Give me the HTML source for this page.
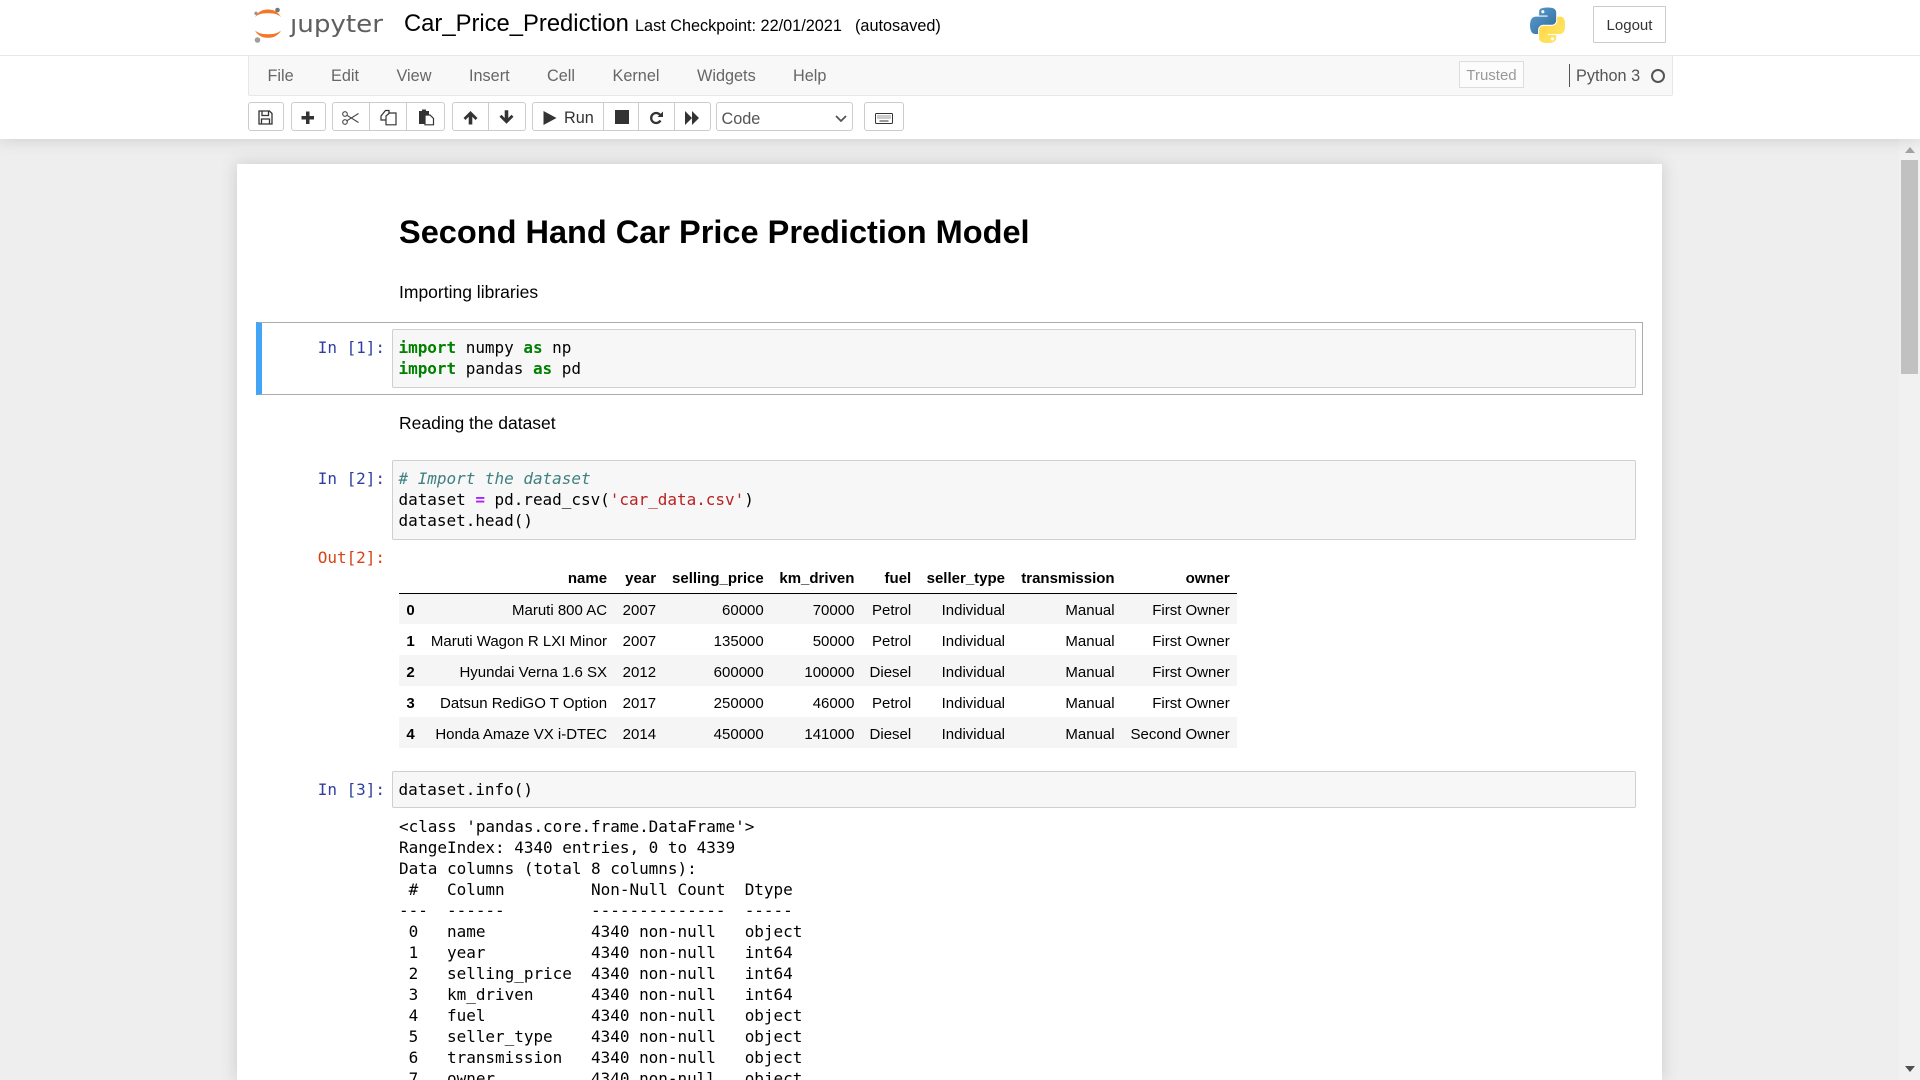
<!DOCTYPE html>
<html lang="en"><head><meta charset="utf-8"><title>Car_Price_Prediction</title>
<style>
html,body{margin:0;padding:0;width:1920px;height:1080px;overflow:hidden;background:#eee;font-family:"Liberation Sans",Arial,sans-serif;color:#000}
#root{position:relative;width:1920px;height:1080px;overflow:hidden;background:#eee}
.a{position:absolute}
.t{position:absolute;white-space:pre;line-height:20px}
#hdr{position:absolute;left:0;top:0;width:1920px;height:139px;background:#fff;box-shadow:0 0 15px 1px rgba(87,87,87,.2);z-index:2}
#nb{position:absolute;left:237px;top:164px;width:1425px;height:916px;background:#fff;box-shadow:0 0 15px 1px rgba(87,87,87,.2)}
.m{color:#666;font-size:16.25px;top:66px}
.btn{position:absolute;top:102px;height:27px;border:1px solid #ccc;border-radius:3px;background:#fff;box-sizing:content-box}
.sep{position:absolute;top:103px;width:1px;height:27px;background:#ccc}
svg.i{position:absolute;z-index:3}
.inp{position:absolute;left:392px;width:1244px;background:#f7f7f7;border:1px solid #cfcfcf;border-radius:2px;box-sizing:border-box}
.code{position:absolute;left:398.500px;margin:0;font:16px/21px "DejaVu Sans Mono","Liberation Mono",monospace;letter-spacing:-.03px;color:#000;white-space:pre}
.pin{position:absolute;right:1535px;font:16px/21px "DejaVu Sans Mono","Liberation Mono",monospace;letter-spacing:-.03px;color:#303F9F;white-space:pre}
.k{color:#008000;font-weight:bold}.o{color:#A2F;font-weight:bold}.c{color:#408080;font-style:italic}.s{color:#BA2121}
table{position:absolute;left:399px;top:563px;border-collapse:collapse;table-layout:fixed;width:838px;font-size:15px;color:#000}
th,td{padding:3px 7.25px 0 0;text-align:right;font-weight:normal;box-sizing:border-box;white-space:nowrap;height:31px;overflow:visible}
thead th{font-weight:bold;height:30px;padding-top:2px;border-bottom:1.25px solid #000}
tbody th{font-weight:bold}
tbody tr:nth-child(odd){background:#f5f5f5}
</style></head><body><div id="root">
<div id="nb"></div>

<div id="hdr">
<svg class="a" style="left:250px;top:4px" width="140" height="42" viewBox="0 0 140 42">
<path d="M5 13C9 6 15 5.500 18 5.500s9 .5 13 7.500C27 9.500 22 9.300 18 9.300S9 9.500 5 13z" fill="#F37726"/>
<path d="M5 26.500C9 33.500 15 33.800 18 33.800s9-.3 13-7.300C27 30 22 30.200 18 30.200S9 30 5 26.500z" fill="#F37726"/>
<circle cx="27.500" cy="6" r="2.300" fill="#767677"/><circle cx="6" cy="9.300" r="1.700" fill="#989798"/><circle cx="7.500" cy="36" r="2.800" fill="#9E9E9E"/>
<text x="40" y="28" font-family="DejaVu Sans" font-size="24" fill="#5f5f5f" textLength="93" lengthAdjust="spacingAndGlyphs">jupyter</text>
<rect x="40" y="6" width="8" height="7" fill="#fff"/>
</svg>
<div class="t" style="left:404px;top:14px;font-size:23.8px;line-height:20px">Car_Price_Prediction</div>
<div class="t" style="left:635px;top:16px;font-size:16.25px">Last Checkpoint: 22/01/2021</div>
<div class="t" style="left:855px;top:16px;font-size:16.25px">(autosaved)</div>
<svg class="a" style="left:1530px;top:7px" width="35" height="36" viewBox="0 0 110 110">
<defs>
<linearGradient id="pb" x1="0" y1="0" x2="1" y2="1"><stop offset="0" stop-color="#5A9FD4"/><stop offset="1" stop-color="#306998"/></linearGradient>
<linearGradient id="py" x1="0" y1="0" x2="1" y2="1"><stop offset="0" stop-color="#FFD43B"/><stop offset="1" stop-color="#FFE873"/></linearGradient>
</defs>
<path fill="url(#pb)" d="M54.919 0.001c-4.584.022-8.961.413-12.812 1.095C30.760 3.099 28.700 7.295 28.700 15.032v10.219h26.812v3.406H18.638c-7.792 0-14.616 4.684-16.750 13.594-2.462 10.213-2.571 16.586 0 27.250 1.906 7.938 6.458 13.594 14.250 13.594h9.219v-12.250c0-8.850 7.657-16.656 16.750-16.656h26.781c7.455 0 13.406-6.138 13.406-13.625V15.032c0-7.266-6.130-12.725-13.406-13.937C64.282.328 59.502-.02 54.918.001zM40.419 8.220c2.770 0 5.031 2.299 5.031 5.125 0 2.816-2.262 5.094-5.031 5.094-2.779 0-5.031-2.277-5.031-5.094 0-2.826 2.252-5.125 5.031-5.125z"/>
<path fill="url(#py)" d="M85.638 28.657v11.906c0 9.231-7.826 17-16.750 17H42.107c-7.336 0-13.406 6.278-13.406 13.625v25.531c0 7.266 6.319 11.540 13.406 13.625 8.487 2.496 16.626 2.947 26.781 0 6.750-1.954 13.406-5.888 13.406-13.625V86.501H55.513v-3.406h40.188c7.792 0 10.696-5.436 13.406-13.594 2.799-8.399 2.680-16.476 0-27.250-1.926-7.757-5.604-13.594-13.406-13.594zM70.575 93.313c2.779 0 5.031 2.277 5.031 5.094 0 2.826-2.252 5.125-5.031 5.125-2.770 0-5.031-2.299-5.031-5.125 0-2.816 2.262-5.094 5.031-5.094z"/>
</svg>
<div class="a" style="left:1593px;top:6px;width:73px;height:37px;box-sizing:border-box;border:1px solid #ccc;border-radius:1px;font-size:15px;line-height:37px;text-align:center;color:#333">Logout</div>

<div class="a" style="left:0;top:55px;width:1920px;height:1px;background:#e7e7e7"></div>
<div class="a" style="left:248px;top:55px;width:1425px;height:41px;box-sizing:border-box;background:#f8f8f8;border:1px solid #e7e7e7;border-radius:0 0 2px 2px"></div>
<div class="t m" style="left:267.500px">File</div>
<div class="t m" style="left:331px">Edit</div>
<div class="t m" style="left:396.500px">View</div>
<div class="t m" style="left:469px">Insert</div>
<div class="t m" style="left:547px">Cell</div>
<div class="t m" style="left:612.500px">Kernel</div>
<div class="t m" style="left:697px">Widgets</div>
<div class="t m" style="left:793px">Help</div>
<div class="a" style="left:1459px;top:61px;width:65px;height:27px;box-sizing:border-box;border:1px solid #ddd;font-size:15px;line-height:27px;text-align:center;color:#999;background:#fcfcfc">Trusted</div>
<div class="a" style="left:1569px;top:64px;width:1px;height:23px;background:#555"></div>
<div class="t" style="left:1576px;top:66px;font-size:16.25px;color:#555">Python 3</div>
<div class="a" style="left:1651px;top:68.500px;width:14px;height:14px;box-sizing:border-box;border:2.200px solid #555;border-radius:50%"></div>

<div class="btn" style="left:248px;width:34px"></div>
<div class="btn" style="left:290.500px;width:33px"></div>
<div class="btn" style="left:332px;width:111px"></div><div class="sep" style="left:368.500px"></div><div class="sep" style="left:406px"></div>
<div class="btn" style="left:452px;width:72px"></div><div class="sep" style="left:487.500px"></div>
<div class="btn" style="left:532px;width:177px"></div><div class="sep" style="left:603px"></div><div class="sep" style="left:638px"></div><div class="sep" style="left:674px"></div>
<div class="btn" style="left:716px;width:135px"></div>
<div class="btn" style="left:864px;width:38px"></div>

<!-- save -->
<svg class="i" style="left:258px;top:110px" width="15" height="15" viewBox="0 0 15 15" fill="none" stroke="#333" stroke-width="1.300"><path d="M1 1h10.500L14 3.500V14H1z"/><path d="M4 1v4.500h6.500V1M3.500 14V9h8v5"/></svg>
<!-- plus -->
<svg class="i" style="left:301px;top:110.500px" width="14" height="14" viewBox="0 0 14 14"><path fill="#333" d="M5 .5h3.500V5H13v3.500H8.500V13H5V8.500H.5V5H5z"/></svg>
<!-- cut -->
<svg class="i" style="left:342px;top:111px" width="17" height="14" viewBox="0 0 17 14" fill="none" stroke="#444" stroke-width="1.100"><circle cx="3" cy="3" r="2.300"/><circle cx="3" cy="11" r="2.300"/><path d="M5 4.300L16.500 11.500M5 9.700L16.500 2.500"/></svg>
<!-- copy -->
<svg class="i" style="left:380px;top:109px" width="17" height="17" viewBox="0 0 17 17" fill="#fff" stroke="#333" stroke-width="1.200"><path d="M1 7l4.500-5.500H9V11H1z"/><path d="M6 15.800V7l3.500-3H16v11.800z"/></svg>
<!-- paste -->
<svg class="i" style="left:418px;top:109px" width="17" height="17" viewBox="0 0 17 17"><path fill="#333" d="M1 2h3V.5h4V2h3v13H1z"/><path fill="#fff" stroke="#333" stroke-width="1.200" d="M7 15.800V6h5l3.500 3.500v6.300z"/></svg>
<!-- up -->
<svg class="i" style="left:463px;top:111px" width="15" height="14" viewBox="0 0 15 14"><path fill="#333" d="M7.500 0L14.500 7l-2 2-3.200-3.200V13.500H5.700V5.800L2.500 9 .5 7z"/></svg>
<!-- down -->
<svg class="i" style="left:499px;top:110px" width="15" height="14" viewBox="0 0 15 14"><path fill="#333" d="M7.500 13.800L14.500 6.800l-2-2-3.200 3.200V.3H5.700V8L2.500 4.800l-2 2z"/></svg>
<!-- play -->
<svg class="i" style="left:543px;top:110.500px" width="14" height="14" viewBox="0 0 14 14"><path fill="#333" d="M.5 0L13.500 7 .5 14z"/></svg>
<div class="t" style="left:564px;top:108px;font-size:16.25px;color:#333;z-index:3">Run</div>
<!-- stop -->
<div class="a" style="left:614.500px;top:110px;width:14px;height:14px;background:#333;z-index:3"></div>
<!-- restart -->
<svg class="i" style="left:649px;top:110.500px" width="15" height="14" viewBox="0 0 15 14" fill="none"><path stroke="#333" stroke-width="2.300" d="M11.500 9.500A5 5 0 1 1 11 3.800"/><path fill="#333" d="M8.500 6h5.500V.5z"/></svg>
<!-- ff -->
<svg class="i" style="left:685px;top:110.500px" width="14" height="14" viewBox="0 0 14 14"><path fill="#333" d="M0 0l7 7-7 7zM7 0l7 7-7 7z"/></svg>
<!-- select -->
<div class="t" style="left:721.500px;top:109px;font-size:16.25px;color:#555;z-index:3">Code</div>
<svg class="i" style="left:834.500px;top:115px" width="12" height="7" viewBox="0 0 12 7" fill="none" stroke="#555" stroke-width="1.800"><path d="M1 1l5 5 5-5"/></svg>
<!-- keyboard -->
<svg class="i" style="left:875px;top:113px" width="18" height="11" viewBox="0 0 18 11"><rect x=".5" y=".5" width="17" height="10" rx="1" fill="#fff" stroke="#333"/><path stroke="#333" stroke-width="1" stroke-dasharray="1 1" d="M2.500 3h13M2.500 5h13"/><path stroke="#333" d="M4.500 8h9"/></svg>
</div>

<!-- scrollbar -->
<div class="a" style="left:1899px;top:139px;width:21px;height:941px;background:#f1f1f1;z-index:1"></div>
<div class="a" style="left:1901px;top:160px;width:17px;height:214px;background:#c1c1c1;z-index:1"></div>
<svg class="a" style="left:1905px;top:147px;z-index:1" width="10" height="6"><path d="M5 0l5 6H0z" fill="#a3a3a3"/></svg>
<svg class="a" style="left:1905px;top:1066px;z-index:1" width="10" height="6"><path d="M0 0h10L5 6z" fill="#505050"/></svg>

<!-- notebook content -->
<div class="t" style="left:399px;top:213px;font-size:32.53px;font-weight:bold;line-height:38px">Second Hand Car Price Prediction Model</div>
<div class="t" style="left:399px;top:282px;font-size:17.500px">Importing libraries</div>

<div class="a" style="left:256px;top:322px;width:1387px;height:73px;box-sizing:border-box;border:1px solid #ababab;border-left:6px solid #42A5F5"></div>
<div class="inp" style="top:329px;height:59px"></div>
<div class="pin" style="top:337px">In [1]:</div>
<div class="code" style="top:337px"><span class="k">import</span> numpy <span class="k">as</span> np
<span class="k">import</span> pandas <span class="k">as</span> pd</div>

<div class="t" style="left:399px;top:413px;font-size:17.500px">Reading the dataset</div>

<div class="inp" style="top:460px;height:80px"></div>
<div class="pin" style="top:468px">In [2]:</div>
<div class="code" style="top:468px"><span class="c"># Import the dataset</span>
dataset <span class="o">=</span> pd.read_csv(<span class="s">'car_data.csv'</span>)
dataset.head()</div>

<div class="pin" style="top:547px;color:#D84315">Out[2]:</div>
<table>
<colgroup><col style="width:23px"><col style="width:192.300px"><col style="width:49px"><col style="width:107.700px"><col style="width:90.700px"><col style="width:56.800px"><col style="width:93.800px"><col style="width:109.600px"><col style="width:115.100px"></colgroup>
<thead><tr><th></th><th>name</th><th>year</th><th>selling_price</th><th>km_driven</th><th>fuel</th><th>seller_type</th><th>transmission</th><th>owner</th></tr></thead>
<tbody>
<tr><th>0</th><td>Maruti 800 AC</td><td>2007</td><td>60000</td><td>70000</td><td>Petrol</td><td>Individual</td><td>Manual</td><td>First Owner</td></tr>
<tr><th>1</th><td>Maruti Wagon R LXI Minor</td><td>2007</td><td>135000</td><td>50000</td><td>Petrol</td><td>Individual</td><td>Manual</td><td>First Owner</td></tr>
<tr><th>2</th><td>Hyundai Verna 1.6 SX</td><td>2012</td><td>600000</td><td>100000</td><td>Diesel</td><td>Individual</td><td>Manual</td><td>First Owner</td></tr>
<tr><th>3</th><td>Datsun RediGO T Option</td><td>2017</td><td>250000</td><td>46000</td><td>Petrol</td><td>Individual</td><td>Manual</td><td>First Owner</td></tr>
<tr><th>4</th><td>Honda Amaze VX i-DTEC</td><td>2014</td><td>450000</td><td>141000</td><td>Diesel</td><td>Individual</td><td>Manual</td><td>Second Owner</td></tr>
</tbody></table>

<div class="inp" style="top:771px;height:37px"></div>
<div class="pin" style="top:779px">In [3]:</div>
<div class="code" style="top:779px">dataset.info()</div>

<div class="code" style="top:816px;left:399px">&lt;class 'pandas.core.frame.DataFrame'&gt;
RangeIndex: 4340 entries, 0 to 4339
Data columns (total 8 columns):
 #   Column         Non-Null Count  Dtype 
---  ------         --------------  ----- 
 0   name           4340 non-null   object
 1   year           4340 non-null   int64 
 2   selling_price  4340 non-null   int64 
 3   km_driven      4340 non-null   int64 
 4   fuel           4340 non-null   object
 5   seller_type    4340 non-null   object
 6   transmission   4340 non-null   object
 7   owner          4340 non-null   object</div>
</div></body></html>
